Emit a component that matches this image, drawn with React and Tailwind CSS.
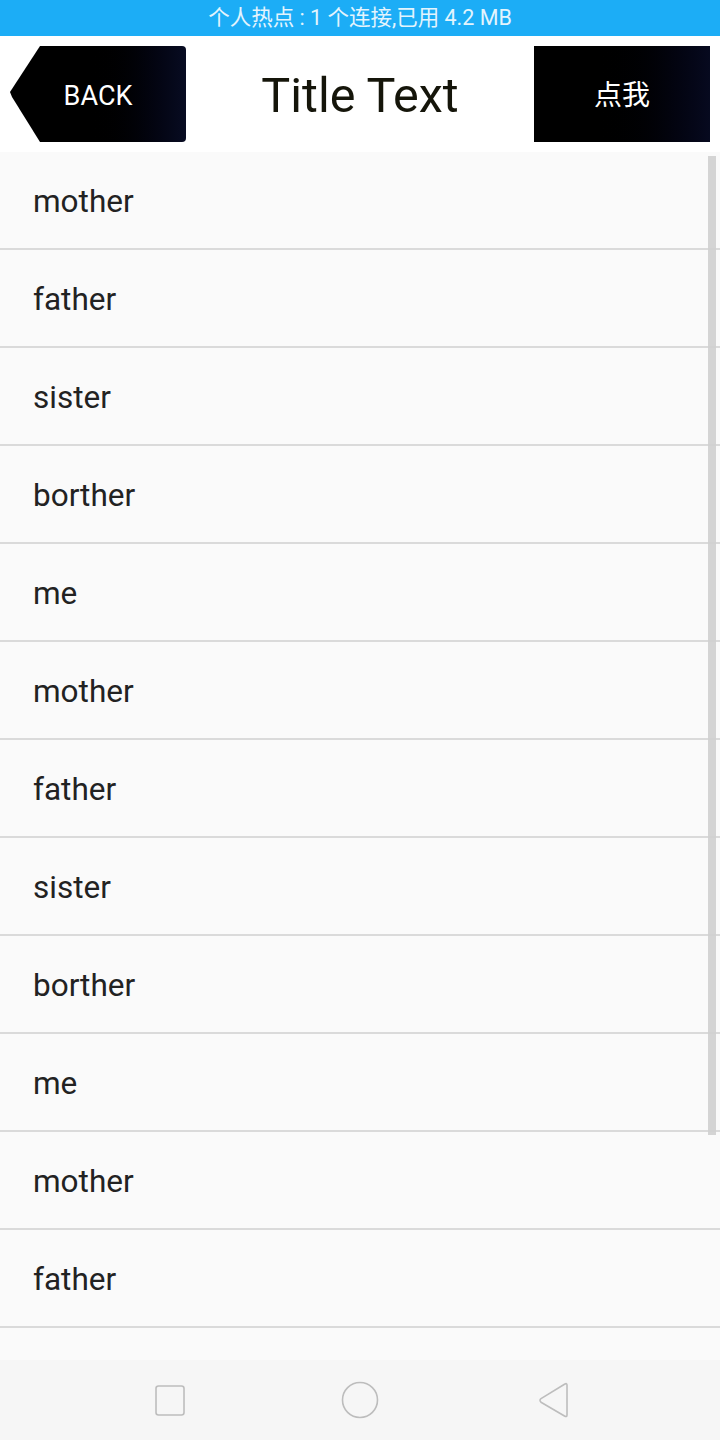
import React from 'react'

const names = ['mother', 'father', 'sister', 'borther', 'me']
const rows = Array.from({ length: 12 }, (_, i) => names[i % 5])

const App = () => {
    return (
        <div className="w-[720px] h-[1440px] flex flex-col bg-[#fafafa] overflow-hidden" style={{ fontFamily: 'Roboto, "Noto Sans CJK SC", sans-serif' }}>
            <div className="h-[36px] bg-[#1cadf6] flex items-center justify-center text-[21.5px] text-[#e3f4fd] leading-none">
                个人热点 : 1 个连接,已用 4.2 MB
            </div>

            <div className="h-[116px] bg-white flex items-center justify-between px-[10px]">
                <button
                    className="w-[176px] h-[96px] flex items-center justify-center pt-[4px] text-white text-[27px] bg-gradient-to-r from-[#000000] from-40% to-[#080c22] rounded-r-[4px]"
                    style={{ clipPath: 'polygon(30px 0, 100% 0, 100% 100%, 30px 100%, 2px 53%, 0 48%)' }}
                >
                    BACK
                </button>
                <h1 className="text-[48.5px] text-[#15150a] leading-none pt-[4px]">Title Text</h1>
                <button className="w-[176px] h-[96px] flex items-center justify-center pt-[3px] text-white text-[28px] bg-gradient-to-r from-[#000000] from-30% to-[#070a1f]">
                    点我
                </button>
            </div>

            <div className="relative flex-1 overflow-hidden">
                {rows.map((name, i) => (
                    <div key={i} className="h-[98px] border-b-2 border-[#dadada] flex items-center pl-[33px] pt-[3px] text-[31.5px] text-[#222222]">
                        {name}
                    </div>
                ))}
                <div className="absolute left-[708px] top-[4px] w-[8px] h-[979px] bg-[#cfcfcf]/90"></div>
            </div>

            <div className="h-[80px] bg-[#f6f6f6] flex items-center justify-between pl-[155px] pr-[150px]">
                <svg width="30" height="31" viewBox="0 0 30 31">
                    <rect x="1" y="1" width="28" height="29" rx="2.5" fill="none" stroke="#bdbdbd" strokeWidth="1.6" />
                </svg>
                <svg width="38" height="38" viewBox="0 0 38 38" className="mr-[3px]">
                    <circle cx="19" cy="19" r="17.5" fill="none" stroke="#bdbdbd" strokeWidth="1.6" />
                </svg>
                <svg width="32" height="36" viewBox="0 0 32 36">
                    <path d="M29 3 L29 33 Q29 35.5 26.5 34 L3 20.2 Q1 18 3 16.6 L26.5 2.2 Q29 0.8 29 3 Z" fill="none" stroke="#bdbdbd" strokeWidth="1.6" strokeLinejoin="round" />
                </svg>
            </div>
        </div>
    )
}

export default App
